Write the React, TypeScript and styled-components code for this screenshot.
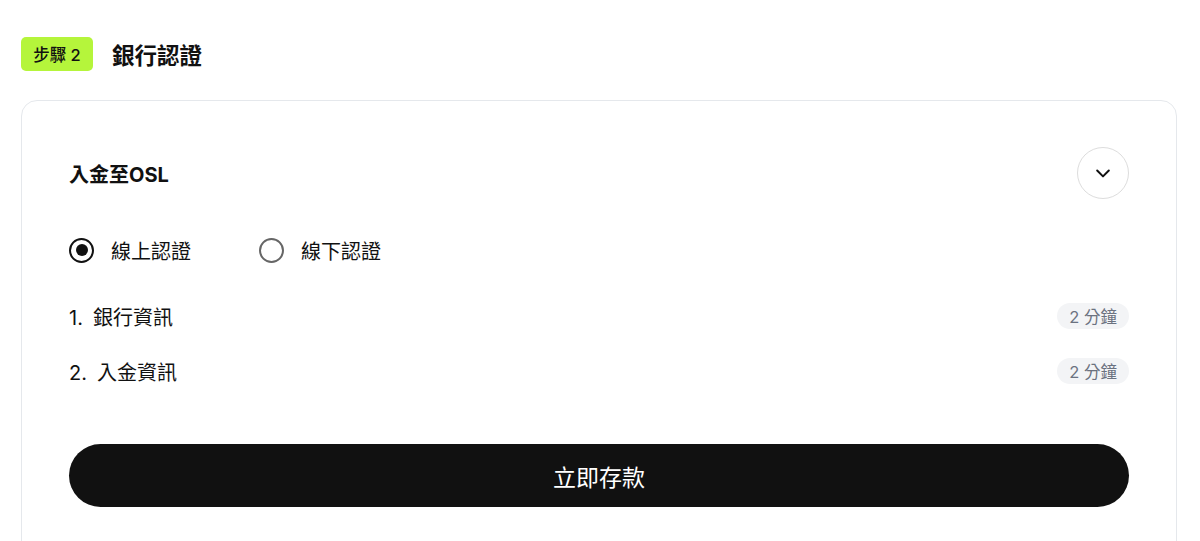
import React, { useState } from "react";
import styled, { createGlobalStyle } from "styled-components";

const GlobalStyle = createGlobalStyle`
  html, body {
    margin: 0;
    padding: 0;
    background: #ffffff;
    font-family: Inter, "Noto Sans CJK TC", sans-serif;
    color: #111111;
  }
  * { box-sizing: border-box; }
`;

const Page = styled.div`
  padding: 37px 23px 0 21px;
`;

const StepHeader = styled.div`
  display: flex;
  align-items: center;
  gap: 19px;
  height: 34px;
  margin-bottom: 29px;
`;

const StepBadge = styled.span`
  display: inline-flex;
  align-items: center;
  justify-content: center;
  height: 34px;
  width: 72px;
  border-radius: 5px;
  background: #b5f53b;
  font-size: 16.5px;
  font-weight: 500;
  color: #111;
`;

const StepTitle = styled.h2`
  margin: 0;
  font-size: 22.5px;
  font-weight: 700;
  color: #111;
`;

const Card = styled.div`
  border: 1px solid #e5e8ec;
  border-radius: 16px;
  padding: 46px 47px 60px;
  min-height: 480px;
`;

const CardHeader = styled.div`
  display: flex;
  align-items: center;
  justify-content: space-between;
  height: 52px;
`;

const CardTitle = styled.h3`
  margin: 0;
  font-size: 20px;
  font-weight: 700;
`;

const ToggleButton = styled.button`
  width: 52px;
  height: 52px;
  border-radius: 50%;
  border: 1px solid #dddddd;
  background: #fff;
  display: flex;
  align-items: center;
  justify-content: center;
  padding: 0;
  cursor: pointer;
  color: #111;
`;

const RadioGroup = styled.div`
  display: flex;
  gap: 68px;
  margin-top: 39px;
  height: 24px;
`;

const RadioOption = styled.label`
  display: flex;
  align-items: center;
  gap: 17px;
  font-size: 20px;
  cursor: pointer;
  color: #111;
`;

const RadioCircle = styled.span<{ $checked: boolean }>`
  width: 25px;
  height: 25px;
  border-radius: 50%;
  border: ${(p) => (p.$checked ? "2.5px solid #111" : "2px solid #666")};
  display: flex;
  align-items: center;
  justify-content: center;
  &::after {
    content: "";
    width: 12px;
    height: 12px;
    border-radius: 50%;
    background: #111;
    display: ${(p) => (p.$checked ? "block" : "none")};
  }
`;

const StepList = styled.div`
  display: flex;
  flex-direction: column;
  gap: 29px;
  margin-top: 41px;
`;

const StepRow = styled.div`
  display: flex;
  align-items: center;
  justify-content: space-between;
  height: 26px;
`;

const StepText = styled.span`
  font-size: 20px;
  color: #111;
`;

const StepIndex = styled.span`
  margin-right: 10px;
`;

const TimePill = styled.span`
  display: inline-flex;
  align-items: center;
  height: 26px;
  padding: 0 12px;
  border-radius: 13px;
  background: #f3f4f6;
  color: #6b7280;
  font-size: 16.5px;
`;

const PrimaryButton = styled.button`
  margin-top: 60px;
  width: 100%;
  height: 63px;
  border: none;
  border-radius: 32px;
  background: #111111;
  color: #ffffff;
  font-family: inherit;
  font-size: 23px;
  font-weight: 400;
  cursor: pointer;
`;

const steps = [
  { label: "銀行資訊", time: "2 分鐘" },
  { label: "入金資訊", time: "2 分鐘" },
];

export default function App() {
  const [mode, setMode] = useState<"online" | "offline">("online");
  return (
    <>
      <GlobalStyle />
      <Page>
        <StepHeader>
          <StepBadge>步驟 2</StepBadge>
          <StepTitle>銀行認證</StepTitle>
        </StepHeader>
        <Card>
          <CardHeader>
            <CardTitle>入金至OSL</CardTitle>
            <ToggleButton aria-label="toggle">
              <svg width="20" height="20" viewBox="0 0 24 24" fill="none" stroke="currentColor" strokeWidth="2.4" strokeLinecap="round" strokeLinejoin="round">
                <path d="M5 9l7 7 7-7" />
              </svg>
            </ToggleButton>
          </CardHeader>
          <RadioGroup>
            <RadioOption onClick={() => setMode("online")}>
              <RadioCircle $checked={mode === "online"} />
              線上認證
            </RadioOption>
            <RadioOption onClick={() => setMode("offline")}>
              <RadioCircle $checked={mode === "offline"} />
              線下認證
            </RadioOption>
          </RadioGroup>
          <StepList>
            {steps.map((s, i) => (
              <StepRow key={s.label}>
                <StepText>
                  <StepIndex>{i + 1}.</StepIndex>
                  {s.label}
                </StepText>
                <TimePill>{s.time}</TimePill>
              </StepRow>
            ))}
          </StepList>
          <PrimaryButton>立即存款</PrimaryButton>
        </Card>
      </Page>
    </>
  );
}
